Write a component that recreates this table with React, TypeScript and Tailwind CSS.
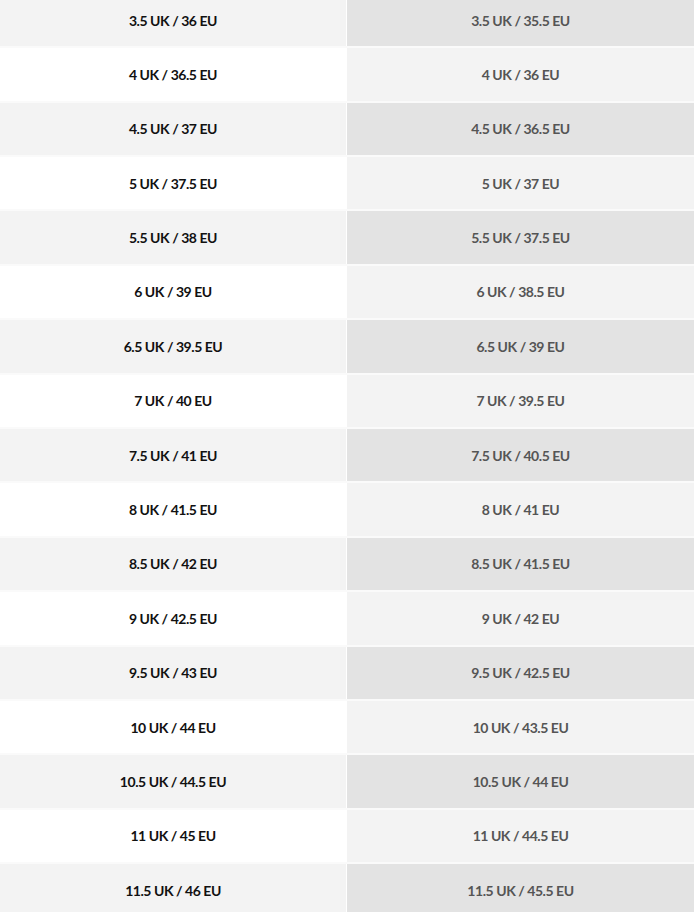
import React from 'react';

const sizes: [string, string][] = [
  ['3.5 UK / 36 EU', '3.5 UK / 35.5 EU'],
  ['4 UK / 36.5 EU', '4 UK / 36 EU'],
  ['4.5 UK / 37 EU', '4.5 UK / 36.5 EU'],
  ['5 UK / 37.5 EU', '5 UK / 37 EU'],
  ['5.5 UK / 38 EU', '5.5 UK / 37.5 EU'],
  ['6 UK / 39 EU', '6 UK / 38.5 EU'],
  ['6.5 UK / 39.5 EU', '6.5 UK / 39 EU'],
  ['7 UK / 40 EU', '7 UK / 39.5 EU'],
  ['7.5 UK / 41 EU', '7.5 UK / 40.5 EU'],
  ['8 UK / 41.5 EU', '8 UK / 41 EU'],
  ['8.5 UK / 42 EU', '8.5 UK / 41.5 EU'],
  ['9 UK / 42.5 EU', '9 UK / 42 EU'],
  ['9.5 UK / 43 EU', '9.5 UK / 42.5 EU'],
  ['10 UK / 44 EU', '10 UK / 43.5 EU'],
  ['10.5 UK / 44.5 EU', '10.5 UK / 44 EU'],
  ['11 UK / 45 EU', '11 UK / 44.5 EU'],
  ['11.5 UK / 46 EU', '11.5 UK / 45.5 EU'],
];

const App: React.FC = () => {
  return (
    <div className="w-[696px] h-[912px] overflow-hidden bg-white font-['Lato','Liberation_Sans',sans-serif]">
      <div className="-mt-[6.2px] pr-[2px]">
        {sizes.map(([uk, alt], i) => {
          const odd = i % 2 === 0;
          return (
            <div key={uk} className="flex h-[54.4px] border-b-2 border-[#fafafa]">
              <div
                className={`w-[346px] flex items-center justify-center text-[14px] tracking-[-0.45px] font-bold text-[#111] ${
                  odd ? 'bg-[#f3f3f3]' : 'bg-white'
                }`}
              >
                {uk}
              </div>
              <div
                className={`flex-1 ml-px flex items-center justify-center text-[14px] tracking-[-0.45px] font-bold text-[#555] ${
                  odd ? 'bg-[#e3e3e3]' : 'bg-[#f3f3f3]'
                }`}
              >
                {alt}
              </div>
            </div>
          );
        })}
      </div>
    </div>
  );
};

export default App;
